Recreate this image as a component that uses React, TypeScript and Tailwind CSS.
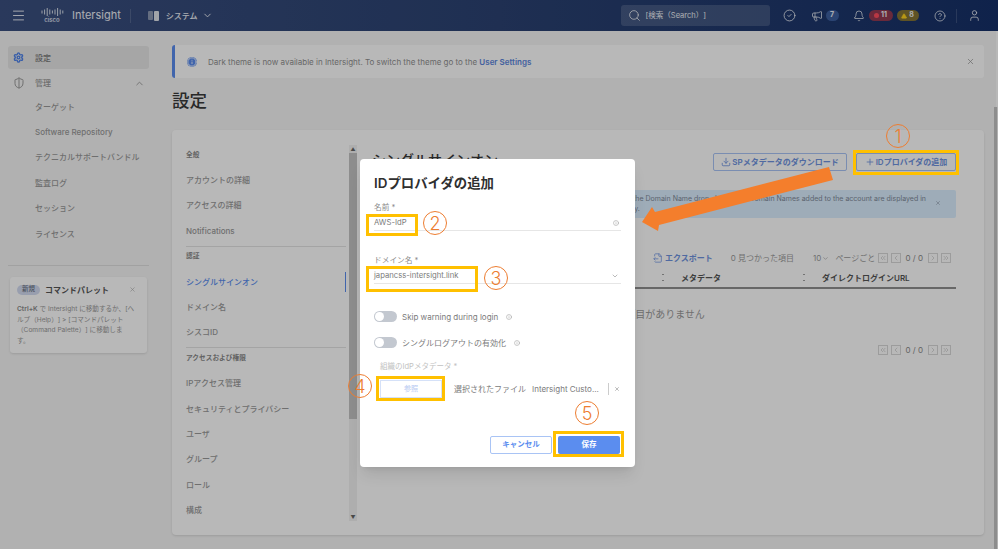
import React from 'react';
import {
  Bell,
  ChevronDown,
  ChevronLeft,
  ChevronRight,
  ChevronUp,
  ChevronsLeft,
  ChevronsRight,
  CircleCheck,
  CircleHelp,
  Download,
  FileOutput,
  Info,
  Megaphone,
  Menu,
  Plus,
  Search,
  Settings,
  ShieldHalf,
  TriangleAlert,
  User,
  X,
} from 'lucide-react';

const subNav = ['ターゲット', 'Software Repository', 'テクニカルサポートバンドル', '監査ログ', 'セッション', 'ライセンス'];

const settingsMenu = [
  { head: '全般', items: ['アカウントの詳細', 'アクセスの詳細', 'Notifications'] },
  { head: '認証', items: ['シングルサインオン', 'ドメイン名', 'シスコID'] },
  { head: 'アクセスおよび権限', items: ['IPアクセス管理', 'セキュリティとプライバシー', 'ユーザ', 'グループ', 'ロール', '構成'] },
];

function CiscoLogo() {
  const bars = [3, 5, 8, 5, 3, 5, 8, 5, 3];
  return (
    <div className="flex flex-col items-center w-[24px]">
      <svg width="23" height="8" viewBox="0 0 23 8" className="text-[#d8deea]">
        {bars.map((h, i) => (
          <rect key={i} x={i * 2.6 + 0.5} y={(8 - h) / 2} width="1" height={h} fill="currentColor" />
        ))}
      </svg>
      <span className="text-[6px] leading-[7px] font-semibold text-[#d8deea]">cisco</span>
    </div>
  );
}

function Pager() {
  const cell = 'w-[10px] h-[10px] border border-[#d8d8d8] flex items-center justify-center text-[#c4c4c4]';
  return (
    <div className="flex items-center gap-[3px] text-[8px] text-[#8a8a8a]">
      <span className={cell}><ChevronsLeft size={8} /></span>
      <span className={cell}><ChevronLeft size={8} /></span>
      <span className="mx-[2px]">0 / 0</span>
      <span className={cell}><ChevronRight size={8} /></span>
      <span className={cell}><ChevronsRight size={8} /></span>
    </div>
  );
}

function SortDots() {
  return <span className="block w-[2px] h-[7px] border-y border-[#a0a0a0]" />;
}

function Toggle() {
  return (
    <span className="w-[23px] h-[11px] rounded-full bg-[#c3c8d0] flex items-center pl-[1px]">
      <span className="w-[9px] h-[9px] rounded-full bg-white" />
    </span>
  );
}

function Mark({ className }: { className: string }) {
  return <div className={`absolute border-[3px] border-[#ffc000] ${className}`} />;
}

function Num({ n, className }: { n: number; className: string }) {
  return (
    <div className={`absolute w-[24px] h-[24px] rounded-full border border-[#ed7d31] flex items-center justify-center text-[18px] font-light text-[#ed7d31] ${className}`}>
      {n}
    </div>
  );
}

export default function App() {
  return (
    <div className="relative w-[998px] h-[549px] overflow-hidden flex flex-col bg-[#f6f6f6] font-['Inter','Noto_Sans_CJK_JP',sans-serif] [text-spacing-trim:space-all] text-[8px] text-[#9a9a9a]">
      <header className="h-[31px] shrink-0 flex items-center bg-linear-to-r from-[#3b5080] via-[#2b4272] to-[#163068] text-[#eef1f7]">
        <Menu size={15} strokeWidth={1.5} className="ml-[11px]" />
        <div className="ml-[14px]"><CiscoLogo /></div>
        <span className="ml-[8px] text-[11px]">Intersight</span>
        <span className="ml-[9px] w-px h-[14px] bg-white/15" />
        <span className="ml-[17px] flex gap-[1px]">
          <span className="w-[5px] h-[9px] bg-[#8d99b3] rounded-[1px]" />
          <span className="w-[5px] h-[10px] bg-[#dfe3ea] rounded-[1px]" />
        </span>
        <span className="ml-[7px] text-[8px] font-medium">システム</span>
        <ChevronDown size={11} className="ml-[4px]" />

        <div className="ml-[408px] w-[149px] h-[21px] rounded-[3px] bg-white/15 flex items-center pl-[7px] gap-[5px]">
          <Search size={13} strokeWidth={1.5} />
          <span className="text-[7.5px]">[検索（Search）]</span>
        </div>
        <CircleCheck size={13} strokeWidth={1.5} className="ml-[13px]" />
        <Megaphone size={12} strokeWidth={1.5} className="ml-[15px]" />
        <span className="ml-[3px] w-[13px] h-[11px] rounded-full bg-[#3c5f9f] text-[7px] font-bold flex items-center justify-center">7</span>
        <Bell size={12} strokeWidth={1.5} className="ml-[14px]" />
        <span className="ml-[4px] w-[24px] h-[11px] rounded-full bg-[#923a52] text-[7px] font-bold flex items-center justify-center gap-[2px]">
          <span className="w-[5px] h-[5px] rounded-full bg-[#ff4d5e]" />11
        </span>
        <span className="ml-[4px] w-[22px] h-[11px] rounded-full bg-[#847434] text-[7px] font-bold flex items-center justify-center gap-[2px]">
          <TriangleAlert size={6} className="text-[#ffd21f] fill-[#ffd21f]" />8
        </span>
        <CircleHelp size={12} strokeWidth={1.5} className="ml-[15px]" />
        <span className="ml-[10px] w-px h-[14px] bg-white/15" />
        <User size={13} strokeWidth={1.5} className="ml-[11px]" />
      </header>

      <div className="flex-1 flex min-h-0">
        <aside className="w-[157px] shrink-0 pl-[8px] pr-[8px] pt-[15px]">
          <div className="h-[23px] rounded-[3px] bg-[#e6e6e6] flex items-center pl-[5px] text-[#7a7a7a] font-medium">
            <Settings size={11} className="text-[#4f83ea]" strokeWidth={3} />
            <span className="ml-[11px]">設定</span>
          </div>
          <div className="h-[28px] mb-[-3px] flex items-center pl-[5px] font-medium">
            <ShieldHalf size={12} className="text-[#9a9a9a]" />
            <span className="ml-[10px]">管理</span>
            <ChevronUp size={11} className="ml-auto mr-[4px]" />
          </div>
          <div className="flex flex-col">
            {subNav.map((t) => (
              <div key={t} className="h-[25.4px] flex items-center pl-[27px] font-medium">{t}</div>
            ))}
          </div>
          <div className="mt-[19px] border-t border-[#dfdfdf]" />
          <div className="relative mt-[11px] mx-[2px] h-[76px] rounded-[3px] bg-white shadow-sm px-[7px] pt-[7px]">
            <X size={7} className="absolute right-[11px] top-[9px] text-[#a8a8a8]" />
            <div className="h-[12px] flex items-center gap-[5px]">
              <span className="h-[10px] px-[5px] rounded-full bg-[#d3dcf2] text-[6.5px] font-medium text-[#6d7484] flex items-center">新規</span>
              <span className="text-[8px] font-semibold text-[#555]">コマンドパレット</span>
            </div>
            <p className="mt-[8px] text-[6.6px] leading-[10.4px]">
              <b className="font-semibold text-[#8a8a8a]">Ctrl+K</b> で Intersight に移動するか、[ヘ<br />
              ルプ（Help）] &gt; [コマンドパレット<br />
              （Command Palette）] に移動しま<br />
              す。
            </p>
          </div>
        </aside>

        <main className="flex-1 min-w-0 pl-[15px] pr-[7px] pt-[14px]">
          <div className="h-[33px] rounded-[3px] bg-white border-l-[3px] border-[#5b8def] flex items-center pl-[12px] pr-[9px]">
            <span className="w-[10px] h-[10px] rounded-full bg-[#5b8def] flex items-center justify-center">
              <Info size={10} className="text-white" />
            </span>
            <span className="ml-[11px] text-[#909090]">
              Dark theme is now available in Intersight. To switch the theme go to the{' '}
              <b className="font-semibold text-[#5c86dc]">User Settings</b>
            </span>
            <X size={9} className="ml-auto" />
          </div>
          <h1 className="mt-[13px] h-[20px] leading-[20px] text-[17.5px] font-medium text-[#3a3a3a]">設定</h1>

          <div className="mt-[19px] h-[405px] rounded-[4px] bg-white shadow-sm flex pl-[14px] pt-[12px]">
            <nav className="w-[163px] shrink-0 pr-[3px]">
              {settingsMenu.map((g, gi) => (
                <div key={g.head}>
                  {gi > 0 && <div className="h-px bg-[#e4e4e4] mt-[2px] mb-[-3px]" />}
                  <div className="h-[25.4px] flex items-center text-[6.7px] font-semibold text-[#8a8a8a]">{g.head}</div>
                  {g.items.map((t) => (
                    <div
                      key={t}
                      className={
                        t === 'シングルサインオン'
                          ? 'h-[20px] my-[2.7px] flex items-center font-medium text-[#5b8def] border-r border-[#5b8def]'
                          : 'h-[25.4px] flex items-center font-medium'
                      }
                    >
                      {t}
                    </div>
                  ))}
                </div>
              ))}
            </nav>
            <div className="w-[8px] h-[376px] mt-[3px] bg-[#f1f1f1] shrink-0 flex flex-col items-center">
              <span className="h-[8px] text-[#666] text-[5px] leading-[8px]">▲</span>
              <div className="w-full h-[266px] bg-[#c4c4c4]" />
              <span className="mt-auto h-[8px] text-[#666] text-[5px] leading-[8px]">▼</span>
            </div>

            <section className="flex-1 min-w-0 ml-[15px] mr-[28px] pt-[11px] flex flex-col">
              <div className="flex items-start h-[37px]">
                <h2 className="-mt-[3px] text-[14px] leading-[20px] font-medium text-[#3a3a3a]">シングルサインオン</h2>
                <button className="ml-auto h-[18px] w-[134px] rounded-[2px] border border-[#a9c4f5] text-[#6f93e0] font-semibold flex items-center justify-center gap-[1px]">
                  <Download size={10} />SPメタデータのダウンロード
                </button>
                <button className="ml-[9px] h-[18px] w-[100px] rounded-[2px] border border-[#a9c4f5] text-[#6f93e0] font-semibold flex items-center justify-center gap-[1px]">
                  <Plus size={10} />IDプロバイダの追加
                </button>
              </div>
              <div className="h-[28px] shrink-0 rounded-[2px] bg-[#dbefff] text-[#7f8a9a] text-[7px] flex flex-col justify-center relative leading-[10.5px]">
                <span className="self-end mr-[30px] whitespace-nowrap">
                  Use the Domain Name drop-down. The Domain Names added to the account are displayed in
                </span>
                <span className="ml-[258px]">by.</span>
                <X size={6} className="absolute right-[15px] top-[10px]" />
              </div>
              <div className="mt-[33px] h-[14px] shrink-0 flex items-center">
                <FileOutput size={10} className="ml-[281px] text-[#7d9fe6]" />
                <span className="ml-[2px] font-semibold text-[#6f93e0]">エクスポート</span>
                <span className="ml-[18px]">0 見つかった項目</span>
                <span className="ml-[19px] flex items-center gap-[1px]">10 <ChevronDown size={7} /></span>
                <span className="ml-[6px]">ページごと</span>
                <div className="ml-auto mr-[5px]"><Pager /></div>
              </div>
              <div className="mt-[3px] h-[21px] shrink-0 border-b-2 border-[#8f8f8f] flex items-center font-semibold text-[#555]">
                <span className="ml-[290px]"><SortDots /></span>
                <span className="ml-[17px]">メタデータ</span>
                <span className="ml-[82px]"><SortDots /></span>
                <span className="ml-[17px]">ダイレクトログインURL</span>
              </div>
              <div className="mt-[18px] text-center text-[10px] leading-[14px] pr-[38px]">表示する項目がありません</div>
              <div className="mt-[23px] flex justify-end pr-[5px]"><Pager /></div>
            </section>
          </div>
        </main>
        <div className="w-[7px] shrink-0 flex flex-col">
          <div className="h-[76px] flex justify-end"><span className="w-[2px] bg-white" /></div>
          <div className="flex-1 pl-[3px] bg-[#ffffff00]">
            <div className="h-full w-[3px] bg-[#c4c4c4]" />
          </div>
        </div>
      </div>

      {/* modal backdrop */}
      <div className="absolute inset-0 bg-black/28" />

      <div className="absolute left-[360px] top-[159px] w-[275px] h-[308px] rounded-[4px] bg-white shadow-lg pl-[14px] pr-[14px] text-[#7b7b7b]">
        <h3 className="mt-[16px] h-[17px] leading-[17px] text-[13.4px] font-semibold text-[#2f2f2f]">IDプロバイダの追加</h3>
        <label className="block mt-[11px] text-[7.7px] leading-[10px] text-[#8a8a8a]">名前 *</label>
        <div className="mt-[2px] h-[16px] flex items-center border-b border-[#e6e6e6] text-[7.7px]">
          AWS-IdP
          <Info size={6} className="ml-auto mr-[2px] text-[#999]" />
        </div>
        <label className="block mt-[25px] text-[7.7px] leading-[10px] text-[#8a8a8a]">ドメイン名 *</label>
        <div className="mt-[2px] h-[16px] flex items-center border-b border-[#e6e6e6] text-[7.7px]">
          japancss-intersight.link
          <ChevronDown size={8} className="ml-auto mr-[2px] text-[#999]" />
        </div>
        <div className="mt-[27px] h-[11px] flex items-center gap-[5px]">
          <Toggle />
          Skip warning during login
          <Info size={6} className="ml-[3px] text-[#999]" />
        </div>
        <div className="mt-[15px] h-[11px] flex items-center gap-[5px]">
          <Toggle />
          シングルログアウトの有効化
          <Info size={6} className="ml-[3px] text-[#999]" />
        </div>
        <div className="mt-[14px] ml-[6px] text-[7.5px] leading-[10px] text-[#c2c2c2]">組織のIdPメタデータ *</div>
        <div className="mt-[8px] ml-[6px] flex items-center h-[18px]">
          <button className="w-[62px] h-[18px] border border-[#d5e1f8] text-[7px] font-medium text-[#bccdf2]">参照</button>
          <span className="ml-[12px]">選択されたファイル</span>
          <span className="ml-[6px]">Intersight Custo...</span>
          <span className="ml-[9px] w-px h-[12px] bg-[#cccccc]" />
          <X size={6} className="ml-[5px]" />
        </div>
        <div className="mt-[38px] mr-[1px] flex justify-end gap-[6px]">
          <button className="w-[62px] h-[18px] rounded-[2px] border border-[#a9c4f5] text-[7.5px] font-semibold text-[#5b8def]">キャンセル</button>
          <button className="w-[62px] h-[18px] rounded-[2px] bg-[#5b8def] text-[7.5px] font-semibold text-white">保存</button>
        </div>
      </div>

      {/* annotations drawn over the screenshot */}
      <Mark className="left-[853px] top-[150px] w-[106px] h-[25px]" />
      <Mark className="left-[366px] top-[214px] w-[52px] h-[22px]" />
      <Mark className="left-[366px] top-[266px] w-[112px] h-[26px]" />
      <Mark className="left-[376px] top-[376px] w-[69px] h-[25px]" />
      <Mark className="left-[553px] top-[431px] w-[71px] h-[26px]" />
      <Num n={1} className="left-[886px] top-[124px]" />
      <Num n={2} className="left-[423px] top-[211px]" />
      <Num n={3} className="left-[484px] top-[266px]" />
      <Num n={4} className="left-[348px] top-[374px]" />
      <Num n={5} className="left-[575px] top-[401px]" />
      <svg className="absolute left-0 top-0" width="998" height="549">
        <polygon points="829,167 833,180 659,225 658,231 642,222 652,207 655,212" fill="#f47e2c" />
      </svg>
    </div>
  );
}
